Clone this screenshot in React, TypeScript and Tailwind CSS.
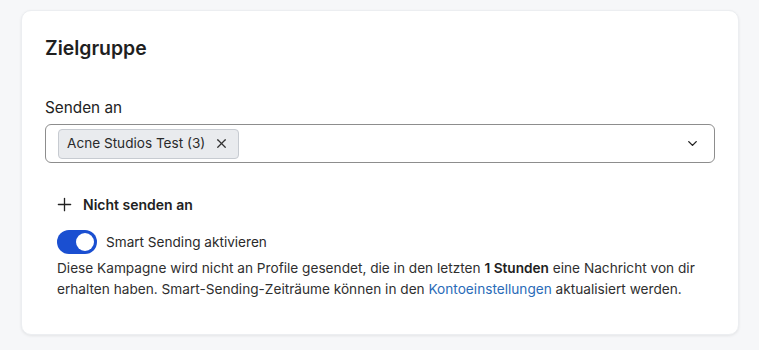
import { ChevronDown, Plus, X } from "lucide-react";

export default function App() {
  return (
    <div
      className="min-h-[350px] w-full bg-[#f6f7f9] pt-[10px] pl-[21px] pr-[20px] pb-[15px]"
      style={{ fontFamily: "Inter, 'Noto Sans', sans-serif" }}
    >
      {/* Card */}
      <div className="w-[718px] h-[325px] bg-white rounded-[10px] border border-[#eceef1] shadow-[0_1px_3px_rgba(0,0,0,0.08)] px-[23px] pt-[23px]">
        <h2 className="text-[19.4px] leading-[28px] font-semibold text-[#1f1f1f]">Zielgruppe</h2>

        {/* Senden an */}
        <div className="mt-[34px]">
          <label className="block text-[15.3px] leading-[24px] text-[#222]">Senden an</label>
          <div className="mt-[4px] h-[39px] w-[670px] border border-[#8d8d8d] rounded-[6px] flex items-center pl-[12px] pr-[14px]">
            <span className="h-[30px] flex items-center gap-[9px] pl-[8px] pr-[9px] bg-[#e9ebee] border border-[#c7cbd1] rounded-[4px] text-[13.6px] text-[#2a2a2a]">
              Acne Studios Test (3)
              <X size={15} strokeWidth={2} className="text-[#333]" />
            </span>
            <div className="flex-1" />
            <ChevronDown size={15} strokeWidth={2.25} className="text-[#222]" />
          </div>
        </div>

        {/* Nicht senden an */}
        <div className="mt-[29px] ml-[9px] flex items-center gap-[8px] h-[24px]">
          <Plus size={21} strokeWidth={1.5} className="text-[#222]" />
          <span className="text-[14px] font-semibold text-[#222]">Nicht senden an</span>
        </div>

        {/* Smart Sending */}
        <div className="mt-[14px] ml-[12px] flex items-center gap-[9px] h-[24px]">
          <button className="w-[40px] h-[24px] rounded-full bg-[#1a4fd1] flex items-center justify-end pr-[3px]">
            <span className="w-[18px] h-[18px] rounded-full bg-white" />
          </button>
          <span className="text-[13.6px] text-[#2a2a2a]">Smart Sending aktivieren</span>
        </div>
        <p className="ml-[12px] mt-[4px] text-[13.65px] leading-[21px] text-[#2f2f2f] w-[660px]">
          Diese Kampagne wird nicht an Profile gesendet, die in den letzten <strong className="font-semibold text-[#1f1f1f]">1 Stunden</strong> eine Nachricht von dir erhalten haben. Smart-Sending-Zeiträume können in den{" "}
          <a className="text-[#2a6bb8]">Kontoeinstellungen</a> aktualisiert werden.
        </p>
      </div>
    </div>
  );
}
